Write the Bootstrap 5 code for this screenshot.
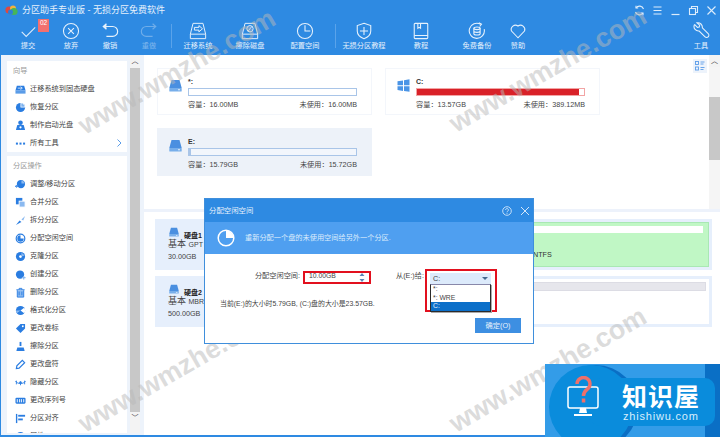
<!DOCTYPE html>
<html lang="zh-CN">
<head>
  <meta charset="UTF-8">
  <meta name="viewport" content="width=device-width, initial-scale=1">
  <title>分区助手专业版</title>
  <link href="https://cdn.jsdelivr.net/npm/bootstrap@5.3.0/dist/css/bootstrap.min.css" rel="stylesheet">
  <style>
    html, body { width: 720px; height: 437px; overflow: hidden; }
    body { font-family: "Liberation Sans", "Noto Sans CJK SC", sans-serif; font-size: 7.2px; line-height: 1; color: #444; background: #fff; }
    .app { width: 720px; height: 437px; position: relative; overflow: hidden; }
    .app-head { height: 55px; background: #2e8ae2; color: #e6f1fc; }
    .title-row { height: 20px; padding-left: 5px; font-size: 9px; gap: 4px; }
    .win-ctl { margin-left: auto; gap: 7px; padding-right: 3px; }
    .win-ctl svg { width: 11px; height: 11px; display: block; }
    .tool-row { height: 35px; }
    .tb-item { flex: none; text-align: center; white-space: nowrap; position: relative; }
    .tb-item svg { width: 18px; height: 18px; display: block; margin: 2px auto 2px; }
    .tb-off { color: #7fb6ec; }
    .w28 { width: 28px; } .w36 { width: 36px; } .w38 { width: 38px; } .w42 { width: 42px; } .w44 { width: 44px; }
    .w48 { width: 48px; } .w54 { width: 54px; } .w56 { width: 56px; } .w58 { width: 58px; }
    .tb-first { margin-left: 6px; }
    .tb-sep { flex: none; width: 1px; height: 24px; background: #5aa3ea; margin: 4px 2px 0 1px; }
    .tb-sep2 { margin: 4px 0 0 3px; }
    .tb-end { margin-left: auto; }
    .num-flag { position: absolute; left: 32px; top: -1px; width: 11px; height: 13px; background: #f2706f; color: #fff; font-size: 6.5px; padding-top: 1px; }
    .shell { height: 380px; background: #edf3fb; }
    .side { width: 144px; padding-left: 7px; flex: none; height: 380px; overflow: hidden; }
    .side-panels { width: 120px; flex: none; padding-top: 6px; gap: 4px; height: 378px; overflow: hidden; }
    .side-box { background: #fff; padding: 6px 0 0; flex: none; }
    .side-head { color: #999; font-size: 7.2px; padding-left: 6px; height: 13px; }
    .side-row { height: 18px; padding-left: 8px; gap: 4px; color: #444; position: relative; }
    .side-row svg { width: 11px; height: 11px; flex: none; }
    .side-row .chev { width: 6px; height: 8px; position: absolute; right: 5px; top: 5px; }
    .s-bar { width: 10px; flex: none; background: #f3f3f3; margin-left: 3px; height: 378px; position: relative; }
    .s-thumb { background: #c8c8c8; }
    .s-arrow { height: 12px; font-size: 7px; color: #333; text-align: center; line-height: 12px; background: #f3f3f3; }
    .side-thumb { height: 344px; margin-top: 1px; }
    .main-pane { width: 576px; flex: none; background: #fff; height: 380px; }
    .top-pane { height: 154px; flex: none; }
    .card-area { width: 565px; padding: 13px 0 0 13px; gap: 13px; flex-wrap: wrap; align-content: flex-start; position: relative; }
    .pt-card { width: 215px; height: 47px; border: 1px solid #f3f6fb; padding: 9px 14px 0 11px; background: #fff; }
    .pt-sel { height: 48px; background: #edf2f9; border-color: #edf2f9; }
    .pt-ico { width: 19px; flex: none; }
    .pt-ico svg { width: 13px; height: 13px; display: block; margin-top: 1px; }
    .pt-body { flex: 1; }
    .pt-name { font-weight: 700; height: 10px; color: #333; font-size: 7px; }
    .pt-bar { height: 8px; border: 1px solid #a9c5e8; background: #fff; margin-bottom: 5px; }
    .pt-bar-e { background: #f2f6fc; box-shadow: inset 2px 0 0 #a9c5e8; }
    .pt-bar-c { border-color: #f2a4a4; padding-right: 5px; }
    .pt-fill { background: #d92128; height: 100%; }
    .view-btn { position: absolute; right: 2px; top: 4px; width: 14px; height: 14px; background: #edf3fb; padding: 2px; }
    .view-btn svg { display: block; width: 10px; height: 10px; }
    .main-bar { width: 11px; flex: none; background: #f5f5f5; height: 154px; }
    .main-thumb { height: 63px; margin-top: 30px; margin-bottom: 37px; }
    .rule-bar { height: 3px; background: #edf2fb; flex: none; }
    .low-pane { padding: 7px 8px 0 11px; gap: 6px; }
    .disk-row { height: 51px; gap: 4px; }
    .disk-info { width: 82px; flex: none; background: #e6effc; padding: 8px 0 0 13px; color: #444; }
    .disk-info svg { width: 12px; height: 10px; display: block; align-self: flex-start; }
    .disk-name { font-weight: 700; color: #222; font-size: 7px; gap: 4px; height: 12px; align-items: flex-end; }
    .disk-kind { font-size: 9px; height: 14px; padding-top: 1px; }
    .disk-kind span { font-size: 7px; }
    .disk-map { flex: 1; border: 3px solid #e6effc; }
    .map-green { background: #c0f7c5; padding: 3px 5px 0 0; border: 1px solid #a9e8b4; height: 100%; }
    .map-white { background: #fff; padding: 3px 3px 0 0; height: 100%; }
    .map-fill { height: 7px; background: #fff; margin-bottom: 18px; }
    .map-gray { height: 9px; background: #e6e6ec; border: 1px solid #dcdce4; margin-left: 5px; }
    .map-text { margin-left: 288px; color: #333; }
    .win-foot { position: absolute; left: 0; right: 0; bottom: 0; height: 2px; background: #2e8ae2; }
    .win-left { position: absolute; left: 0; top: 55px; bottom: 0; width: 1px; background: #2e8ae2; }
    .wm { position: absolute; transform: translate(-50%, -50%) rotate(-30deg); font-size: 27px; font-weight: 700; color: rgba(185, 185, 185, .5); white-space: nowrap; pointer-events: none; }
    .wm-a { left: 177px; top: 72px; } .wm-b { left: 548px; top: 70px; } .wm-c { left: 177px; top: 370px; } .wm-d { left: 548px; top: 370px; }
    .dlg { position: absolute; left: 204px; top: 198px; width: 330px; height: 146px; border: 1px solid #3f8fdc; background: #fff; }
    .dlg-title { height: 23px; background: #2e8ae2; color: #e6f1fc; padding: 0 3px 0 4px; font-size: 7.4px; }
    .dlg-title svg { width: 10px; height: 10px; }
    .dlg-btns { margin-left: auto; gap: 8px; }
    .dlg-sub { height: 32px; background: #4f9ff0; color: #dcecfc; padding-left: 12px; gap: 10px; }
    .dlg-sub svg { width: 18px; height: 18px; }
    .dlg-body { padding-top: 15px; height: 57px; }
    .dlg-left { width: 220px; flex: none; color: #444; }
    .dlg-line { height: 14px; }
    .lbl-a { width: 95px; text-align: right; margin-right: 3px; flex: none; }
    .red-input { width: 68px; height: 13px; border: 2px solid #e2101e; padding-left: 4px; position: relative; flex: none; font-size: 6.8px; margin-top: 2px; }
    .spin { position: absolute; right: 4px; top: 0; width: 6px; height: 9px; }
    .lbl-b { margin-left: 25px; white-space: nowrap; }
    .dlg-note { margin: 18px 0 0 15px; white-space: nowrap; font-size: 6.9px; }
    .red-select { width: 72px; height: 43px; border: 2px solid #e2101e; padding: 2px 4px 0 3px; flex: none; }
    .sel-head { height: 11px; background: #dceafb; padding: 0 3px 0 3px; }
    .sel-caret { margin-left: auto; width: 0; height: 0; border: 3px solid transparent; border-top: 3px solid #44688f; border-bottom: 0; }
    .sel-list { border: 1px solid #2b2b2b; border-top-color: #88a; background: #fff; box-shadow: 1px 1px 0 #aaa; }
    .sel-opt { height: 8.5px; padding-left: 2px; line-height: 8.5px; font-size: 6.8px; }
    .sel-on { background: #0b6fc9; color: #e8f2fc; }
    .ok-btn { width: 46px; height: 15px; background: #3d8fe2; color: #e8f2fc; border: 0; border-radius: 0; padding: 0; font-size: 7.2px; line-height: 15px; }
    .dlg-foot { padding: 7px 12px 0 0; }
    .zs-logo { position: absolute; left: 545px; top: 364px; width: 175px; height: 73px; background: #339ce8; overflow: hidden; }
    .zs-strip { position: absolute; right: 0; top: 0; bottom: 0; width: 15px; background: #0a6fc5; }
    .zs-pill { position: absolute; left: 45px; top: 14px; width: 125px; height: 48px; border-radius: 10px; background: #0a8cdc; }
    .zs-disc { position: absolute; left: 4px; top: 1px; width: 84px; height: 84px; border-radius: 50%; background: #0a8cdc; box-shadow: 5px 0 0 #0a6fc5; }
    .zs-mark { position: absolute; left: 22px; top: 12px; width: 32px; height: 42px; }
    .zs-cn { position: absolute; left: 77px; top: 19px; font-size: 25px; font-weight: 700; color: #fff; letter-spacing: 1px; font-family: "Noto Sans CJK SC", sans-serif; line-height: 1; white-space: nowrap; }
    .zs-en { position: absolute; left: 78px; top: 47px; font-size: 11px; color: #d8eefc; letter-spacing: .8px; white-space: nowrap; }
  </style>
</head>
<body>
<svg width="0" height="0" class="position-absolute">
  <symbol id="drive" viewBox="0 0 13 13"><path d="M2.5 1h8l2.200 8H.3z" fill="#4a8fe0"/><rect x=".3" y="9" width="12.400" height="3.500" rx=".5" fill="#77aeea"/><rect x="9" y="10.400" width="2" height=".8" fill="#fff"/></symbol>
  <symbol id="pie" viewBox="0 0 12 12"><circle cx="6" cy="6" r="5" fill="#2a7de1"/><path d="M6 6V1a5 5 0 0 1 5 5z" fill="#fff"/><path d="M6.800 5.200V1.700a4 4 0 0 1 3.500 3.500z" fill="#7db2ee"/></symbol>
</svg>
<div class="app">
  <header class="app-head">
    <div class="title-row d-flex align-items-center">
      <svg width="13" height="11" viewBox="0 0 13 11"><circle cx="4" cy="5" r="3.600" fill="#e0483e"/><circle cx="8" cy="3.500" r="3" fill="#f2b33d"/><circle cx="9" cy="6.500" r="3.600" fill="#47b558"/><circle cx="5.500" cy="7" r="2.500" fill="#2f7fd6"/></svg>
      <span>分区助手专业版 - 无损分区免费软件</span>
      <div class="win-ctl d-flex align-items-center">
        <svg viewBox="0 0 11 11" fill="none" stroke="#dcecfb" stroke-width="1.100"><path d="M9.500 4A4.200 4.200 0 0 0 2 3M1.500 7A4.200 4.200 0 0 0 9 8"/><path d="M2 .8V3h2.200M9 10.200V8H6.800"/></svg>
        <svg viewBox="0 0 11 11" stroke="#dcecfb" stroke-width="1.100"><path d="M1.500 2h8M1.500 5.500h8M1.500 9h8"/></svg>
        <svg viewBox="0 0 11 11" stroke="#dcecfb" stroke-width="1.200"><path d="M1.500 9.500h8"/></svg>
        <svg viewBox="0 0 11 11" fill="none" stroke="#dcecfb" stroke-width="1.100"><rect x="1.500" y="3.500" width="6" height="6"/><path d="M3.500 3.500v-2h6v6h-2"/></svg>
        <svg viewBox="0 0 11 11" stroke="#dcecfb" stroke-width="1.100"><path d="M1.500 1.500l8 8M9.500 1.500l-8 8"/></svg>
      </div>
    </div>
    <div class="tool-row d-flex">
      <div class="tb-item w44 tb-first">
        <svg viewBox="0 0 20 20" fill="none" stroke="#dcecfb" stroke-width="1.200"><path d="M3 11l5 5 10-10"/></svg>提交
        <span class="num-flag">02</span>
      </div>
      <div class="tb-item w42">
        <svg viewBox="0 0 20 20" fill="none" stroke="#e6f1fc" stroke-width="1.200"><circle cx="10" cy="10" r="8.400"/><path d="M6.800 6.800l6.400 6.400M13.200 6.800l-6.400 6.400"/></svg>放弃
      </div>
      <div class="tb-item w36">
        <svg viewBox="0 0 20 20" fill="none" stroke="#e6f1fc" stroke-width="1.300"><path d="M3 5h10a4.500 4.500 0 0 1 0 11H6"/><path d="M6 2L2.500 5 6 8" fill="#e6f1fc"/></svg>撤销
      </div>
      <div class="tb-item w42 tb-off">
        <svg viewBox="0 0 20 20" fill="none" stroke="#6fadea" stroke-width="1.300"><path d="M17 5H7a4.500 4.500 0 0 0 0 11h7"/><path d="M14 2l3.500 3L14 8"/></svg>重做
      </div>
      <div class="tb-sep"></div>
      <div class="tb-item w48">
        <svg viewBox="0 0 20 20" fill="none" stroke="#e6f1fc" stroke-width="1.100"><path d="M4.500 1.500h11l3 12v5h-17v-5z"/><path d="M1.500 13.500h17"/><path d="M6 6h5V4l4 3.500-4 3.500V9H6z"/></svg>迁移系统
      </div>
      <div class="tb-item w56">
        <svg viewBox="0 0 20 20" fill="none" stroke="#e6f1fc" stroke-width="1.100"><path d="M4.500 1.500h11l3 12v5h-17v-5z"/><path d="M1.500 13.500h17"/><circle cx="10" cy="7.500" r="3.500"/><path d="M8 10l4-5"/></svg>擦除磁盘
      </div>
      <div class="tb-item w54">
        <svg viewBox="0 0 20 20" fill="none" stroke="#e6f1fc" stroke-width="1.200"><circle cx="10" cy="10" r="8.400"/><path d="M10 3.500V10h6"/></svg>配置空间
      </div>
      <div class="tb-sep tb-sep2"></div>
      <div class="tb-item w56">
        <svg viewBox="0 0 20 20" fill="none" stroke="#e6f1fc" stroke-width="1.200"><path d="M10 1.500l7.500 2.500v6c0 4.500-3.500 7-7.500 8.500-4-1.500-7.500-4-7.500-8.500V4z"/><path d="M10 5.500v9M5.500 10h9"/></svg>无损分区教程
      </div>
      <div class="tb-item w58">
        <svg viewBox="0 0 20 20" fill="none" stroke="#e6f1fc" stroke-width="1.200"><rect x="2.500" y="1.500" width="15" height="17" rx="1"/><path d="M2.500 15h15M6.500 1.500V7l1.500-1 1.500 1V1.500"/></svg>教程
      </div>
      <div class="tb-item w54">
        <svg viewBox="0 0 20 20" fill="none" stroke="#e6f1fc" stroke-width="1.200"><path d="M14 2.500A8.400 8.400 0 1 0 18 8"/><path d="M12 .8l3 1.700-2 2.500"/><ellipse cx="10" cy="7" rx="3.500" ry="1.500"/><path d="M6.500 7v6c0 2 7 2 7 0V7M6.500 10c0 2 7 2 7 0"/></svg>免费备份
      </div>
      <div class="tb-item w28">
        <svg viewBox="0 0 20 20" fill="none" stroke="#e6f1fc" stroke-width="1.200"><path d="M10 17.500L2.800 10A4.700 4.700 0 0 1 10 4.500 4.700 4.700 0 0 1 17.200 10z"/></svg>赞助
      </div>
      <div class="tb-item w38 tb-end">
        <svg viewBox="0 0 20 20" fill="none" stroke="#e6f1fc" stroke-width="1.200"><path d="M3 3l3 3 2-.5.500-2-3-2.500a5 5 0 0 1 6 5.500l6.500 6.500a2.300 2.300 0 0 1-3.500 3.500l-6.500-6.500a5 5 0 0 1-5.500-6.500z"/></svg>工具
      </div>
    </div>
  </header>

  <div class="shell d-flex">
    <aside class="side d-flex">
      <div class="side-panels d-flex flex-column">
        <div class="side-box">
          <div class="side-head">向导</div>
          <div class="side-row d-flex align-items-center"><svg viewBox="0 0 12 12"><path d="M2 2h8l1.500 5h-11z" fill="#2a7de1"/><rect x=".5" y="7" width="11" height="3.500" fill="#5a9ce8"/><path d="M3 4.500h4M6 3l2 1.500L6 6" stroke="#fff" fill="none" stroke-width=".8"/></svg>迁移系统到固态硬盘</div>
          <div class="side-row d-flex align-items-center"><svg><use href="#pie"/></svg>恢复分区</div>
          <div class="side-row d-flex align-items-center"><svg viewBox="0 0 12 12" fill="#2a7de1"><circle cx="6" cy="3" r="2.500"/><path d="M1 11l1.500-5.500h7L11 11z"/><circle cx="6" cy="8" r="1.200" fill="#fff"/></svg>制作启动光盘</div>
          <div class="side-row d-flex align-items-center"><svg viewBox="0 0 12 12" fill="#2a7de1"><rect x="1" y="5" width="2.200" height="2.200"/><rect x="4.900" y="5" width="2.200" height="2.200"/><rect x="8.800" y="5" width="2.200" height="2.200"/></svg>所有工具<svg class="chev" viewBox="0 0 6 8" fill="none" stroke="#5a9ce8"><path d="M1.500 .5L5 4 1.500 7.500"/></svg></div>
        </div>
        <div class="side-box">
          <div class="side-head">分区操作</div>
          <div class="side-row d-flex align-items-center"><svg viewBox="0 0 12 12"><circle cx="6.500" cy="5.500" r="4.500" fill="#2a7de1"/><path d="M.5 8h6M2 6.500L.5 8 2 9.500" stroke="#2a7de1" fill="none"/><path d="M7 5V1.500A4 4 0 0 1 10.500 5z" fill="#8ab9f0"/></svg>调整/移动分区</div>
          <div class="side-row d-flex align-items-center"><svg viewBox="0 0 12 12"><rect x="1" y="1" width="7" height="7" fill="#2a7de1"/><rect x="4.500" y="4.500" width="6.500" height="6.500" fill="#8ab9f0" stroke="#fff"/></svg>合并分区</div>
          <div class="side-row d-flex align-items-center"><svg viewBox="0 0 12 12" fill="#2a7de1"><path d="M1 11l4-5 2 1.500z"/><path d="M7 5l4-4-2 5z" fill="#8ab9f0"/></svg>拆分分区</div>
          <div class="side-row d-flex align-items-center"><svg viewBox="0 0 12 12"><circle cx="6" cy="6" r="4.700" fill="none" stroke="#2a7de1" stroke-width="1.300"/><path d="M6 6V2.500A3.500 3.500 0 1 0 9.500 6z" fill="#2a7de1"/></svg>分配空闲空间</div>
          <div class="side-row d-flex align-items-center"><svg viewBox="0 0 12 12"><circle cx="6" cy="6" r="5" fill="#2a7de1"/><circle cx="6" cy="6" r="1.500" fill="#fff"/><path d="M7 1.500L10.500 5 7 6z" fill="#8ab9f0"/></svg>克隆分区</div>
          <div class="side-row d-flex align-items-center"><svg viewBox="0 0 12 12"><circle cx="5.500" cy="6" r="4.500" fill="#2a7de1"/><path d="M7.500 9.500h4M9.500 7.500v4" stroke="#8ab9f0" stroke-width="1.300"/></svg>创建分区</div>
          <div class="side-row d-flex align-items-center"><svg viewBox="0 0 12 12" fill="none" stroke="#2a7de1"><path d="M1.500 3h9M4.500 3V1.500h3V3"/><path d="M2.500 3.500v7.500h7V3.500" fill="#8ab9f0"/><path d="M4.500 5v4M7.500 5v4"/></svg>删除分区</div>
          <div class="side-row d-flex align-items-center"><svg viewBox="0 0 12 12"><circle cx="6" cy="6" r="5" fill="#2a7de1"/><path d="M6 6l4-3a5 5 0 0 1 0 6z" fill="#fff"/><path d="M6 6L2 9a5 5 0 0 1-1-3z" fill="#8ab9f0"/></svg>格式化分区</div>
          <div class="side-row d-flex align-items-center"><svg viewBox="0 0 12 12"><path d="M1 6l5-5h5v5l-5 5z" fill="#2a7de1"/><circle cx="8.500" cy="3.500" r="1" fill="#fff"/></svg>更改卷标</div>
          <div class="side-row d-flex align-items-center"><svg viewBox="0 0 12 12" fill="#2a7de1"><rect x="5" y="1" width="2" height="4.500"/><path d="M1.500 11l1-4h7l1 4z"/></svg>擦除分区</div>
          <div class="side-row d-flex align-items-center"><svg viewBox="0 0 12 12" fill="none" stroke="#2a7de1" stroke-width="1.300"><path d="M1.500 10.500l.5-3L8 1.500l2.500 2.500-6 6z"/></svg>更改盘符</div>
          <div class="side-row d-flex align-items-center"><svg viewBox="0 0 12 12" fill="none" stroke="#2a7de1"><path d="M.5 4.500C3 8 9 8 11.500 4.500"/><path d="M1.500 4v4M10.500 4v4M6 7v2"/><circle cx="6" cy="6" r="1" fill="#2a7de1"/></svg>隐藏分区</div>
          <div class="side-row d-flex align-items-center"><svg viewBox="0 0 12 12"><rect x=".5" y="3" width="11" height="6.500" rx="1.200" fill="#2a7de1"/><path d="M2.500 4.500v3.500M5 4.500v3.500M7 4.500v3.500M9.500 4.500v3.500" stroke="#fff"/></svg>更改序列号</div>
          <div class="side-row d-flex align-items-center"><svg viewBox="0 0 12 12" fill="#2a7de1"><rect x="1" y="1" width="1.500" height="10"/><rect x="3.500" y="2" width="7.500" height="2"/><rect x="3.500" y="6" width="5" height="2"/></svg>分区对齐</div>
          <div class="side-row d-flex align-items-center"><svg viewBox="0 0 12 12"><circle cx="6" cy="6" r="5" fill="#2a7de1"/></svg>属性</div>
        </div>
      </div>
      <div class="s-bar">
        <div class="s-arrow">︿</div>
        <div class="s-thumb side-thumb"></div>
        <div class="s-arrow">﹀</div>
      </div>
    </aside>

    <main class="main-pane d-flex flex-column">
      <div class="top-pane d-flex">
        <div class="card-area d-flex">
          <div class="pt-card d-flex">
            <div class="pt-ico"><svg><use href="#drive"/></svg></div>
            <div class="pt-body">
              <div class="pt-name">*:</div>
              <div class="pt-bar"></div>
              <div class="d-flex justify-content-between"><span>容量：16.00MB</span><span>未使用：16.00MB</span></div>
            </div>
          </div>
          <div class="pt-card d-flex">
            <div class="pt-ico"><svg viewBox="0 0 13 13" fill="#4a94e6"><path d="M.5 2.300L6 1.400v4.800H.5zM7 1.200L12.500.3v5.900H7zM.5 7.200H6V12L.5 11zM7 7.200h5.500v5.500L7 12z"/></svg></div>
            <div class="pt-body">
              <div class="pt-name">C:</div>
              <div class="pt-bar pt-bar-c"><div class="pt-fill"></div></div>
              <div class="d-flex justify-content-between"><span>容量：13.57GB</span><span>未使用：389.12MB</span></div>
            </div>
          </div>
          <div class="pt-card pt-sel d-flex">
            <div class="pt-ico"><svg><use href="#drive"/></svg></div>
            <div class="pt-body">
              <div class="pt-name">E:</div>
              <div class="pt-bar pt-bar-e"></div>
              <div class="d-flex justify-content-between"><span>容量：15.79GB</span><span>未使用：15.72GB</span></div>
            </div>
          </div>
          <div class="view-btn"><svg viewBox="0 0 10 10" fill="none" stroke="#5a9ce8" stroke-width=".9"><rect x=".5" y=".5" width="3" height="3"/><rect x=".5" y="6" width="3" height="3"/><path d="M5.500 1h4M5.500 3h3M5.500 6.500h4M5.500 8.500h3"/></svg></div>
        </div>
        <div class="main-bar">
          <div class="s-arrow">︿</div>
          <div class="s-thumb main-thumb"></div>
        </div>
      </div>
      <div class="rule-bar"></div>
      <div class="low-pane d-flex flex-column">
        <div class="disk-row d-flex">
          <div class="disk-info">
            <div class="disk-name d-flex"><svg viewBox="0 0 13 11"><use href="#drive"/></svg>硬盘1</div>
            <div class="disk-kind">基本 <span>GPT</span></div>
            <div>30.00GB</div>
          </div>
          <div class="disk-map">
            <div class="map-green"><div class="map-fill"></div><div class="map-text">NTFS</div></div>
          </div>
        </div>
        <div class="disk-row d-flex">
          <div class="disk-info">
            <div class="disk-name d-flex"><svg viewBox="0 0 13 11"><use href="#drive"/></svg>硬盘2</div>
            <div class="disk-kind">基本 <span>MBR</span></div>
            <div>500.00GB</div>
          </div>
          <div class="disk-map">
            <div class="map-white"><div class="map-gray"></div></div>
          </div>
        </div>
      </div>
    </main>
  </div>

  <div class="win-left"></div>
  <div class="win-foot"></div>

  <div class="wm wm-a">www.wmzhe.com</div>
  <div class="wm wm-b">www.wmzhe.com</div>
  <div class="wm wm-c">www.wmzhe.com</div>
  <div class="wm wm-d">www.wmzhe.com</div>

  <div class="dlg">
    <div class="dlg-title d-flex align-items-center">
      <span>分配空闲空间</span>
      <div class="dlg-btns d-flex align-items-center">
        <svg viewBox="0 0 10 10" fill="none" stroke="#e6f1fc" stroke-width=".8"><circle cx="5" cy="5" r="4.300"/><path d="M3.600 4a1.400 1.400 0 1 1 2.200 1.100c-.6.400-.8.600-.8 1.200M5 7v.8"/></svg>
        <svg viewBox="0 0 10 10" stroke="#e6f1fc" stroke-width=".9"><path d="M1 1l8 8M9 1l-8 8"/></svg>
      </div>
    </div>
    <div class="dlg-sub d-flex align-items-center">
      <svg viewBox="0 0 18 18" fill="none" stroke="#fff" stroke-width="1.500"><circle cx="9" cy="9" r="7.800"/><path d="M9 9V1.500A7.500 7.500 0 0 1 16.500 9z" fill="#fff" stroke="none"/></svg>
      <span>重新分配一个盘的未使用空间给另外一个分区.</span>
    </div>
    <div class="dlg-body d-flex">
      <div class="dlg-left">
        <div class="dlg-line d-flex align-items-center">
          <span class="lbl-a">分配空闲空间:</span>
          <div class="red-input">10.00GB
            <svg class="spin" viewBox="0 0 6 9" fill="#5a86b8"><path d="M3 0l2.500 3h-5zM3 9L.5 6h5z"/></svg>
          </div>
          <span class="lbl-b">从(E:)给:</span>
        </div>
        <div class="dlg-note">当前(E:)的大小时5.79GB, (C:)盘的大小是23.57GB.</div>
      </div>
      <div class="red-select">
        <div class="sel-head d-flex align-items-center">C:<span class="sel-caret"></span></div>
        <div class="sel-list">
          <div class="sel-opt">*:</div>
          <div class="sel-opt">*: WRE</div>
          <div class="sel-opt sel-on">C:</div>
        </div>
      </div>
    </div>
    <div class="dlg-foot d-flex justify-content-end">
      <button type="button" class="btn ok-btn">确定(O)</button>
    </div>
  </div>

  <div class="zs-logo">
    <div class="zs-strip"></div>
    <div class="zs-disc"></div>
    <div class="zs-pill"></div>
    <svg class="zs-mark" viewBox="0 0 32 42">
      <rect x="1" y="11" width="30" height="21" rx="2" fill="none" stroke="#fff" stroke-width="1.500"/>
      <path d="M13 32h6l1 5h-8zM7 38h18v2H7z" fill="#fff"/>
      <path d="M10 8a6.500 6.500 0 1 1 10 5.500c-2.500 1.700-3.500 3-3.500 6.500" fill="none" stroke="#f0706a" stroke-width="3.400"/>
      <rect x="14.800" y="22.500" width="3.500" height="4" fill="#f0706a"/>
    </svg>
    <div class="zs-cn">知识屋</div>
    <div class="zs-en">zhishiwu.com</div>
  </div>
</div>
<script src="https://cdn.jsdelivr.net/npm/bootstrap@5.3.0/dist/js/bootstrap.bundle.min.js"></script>
</body>
</html>
